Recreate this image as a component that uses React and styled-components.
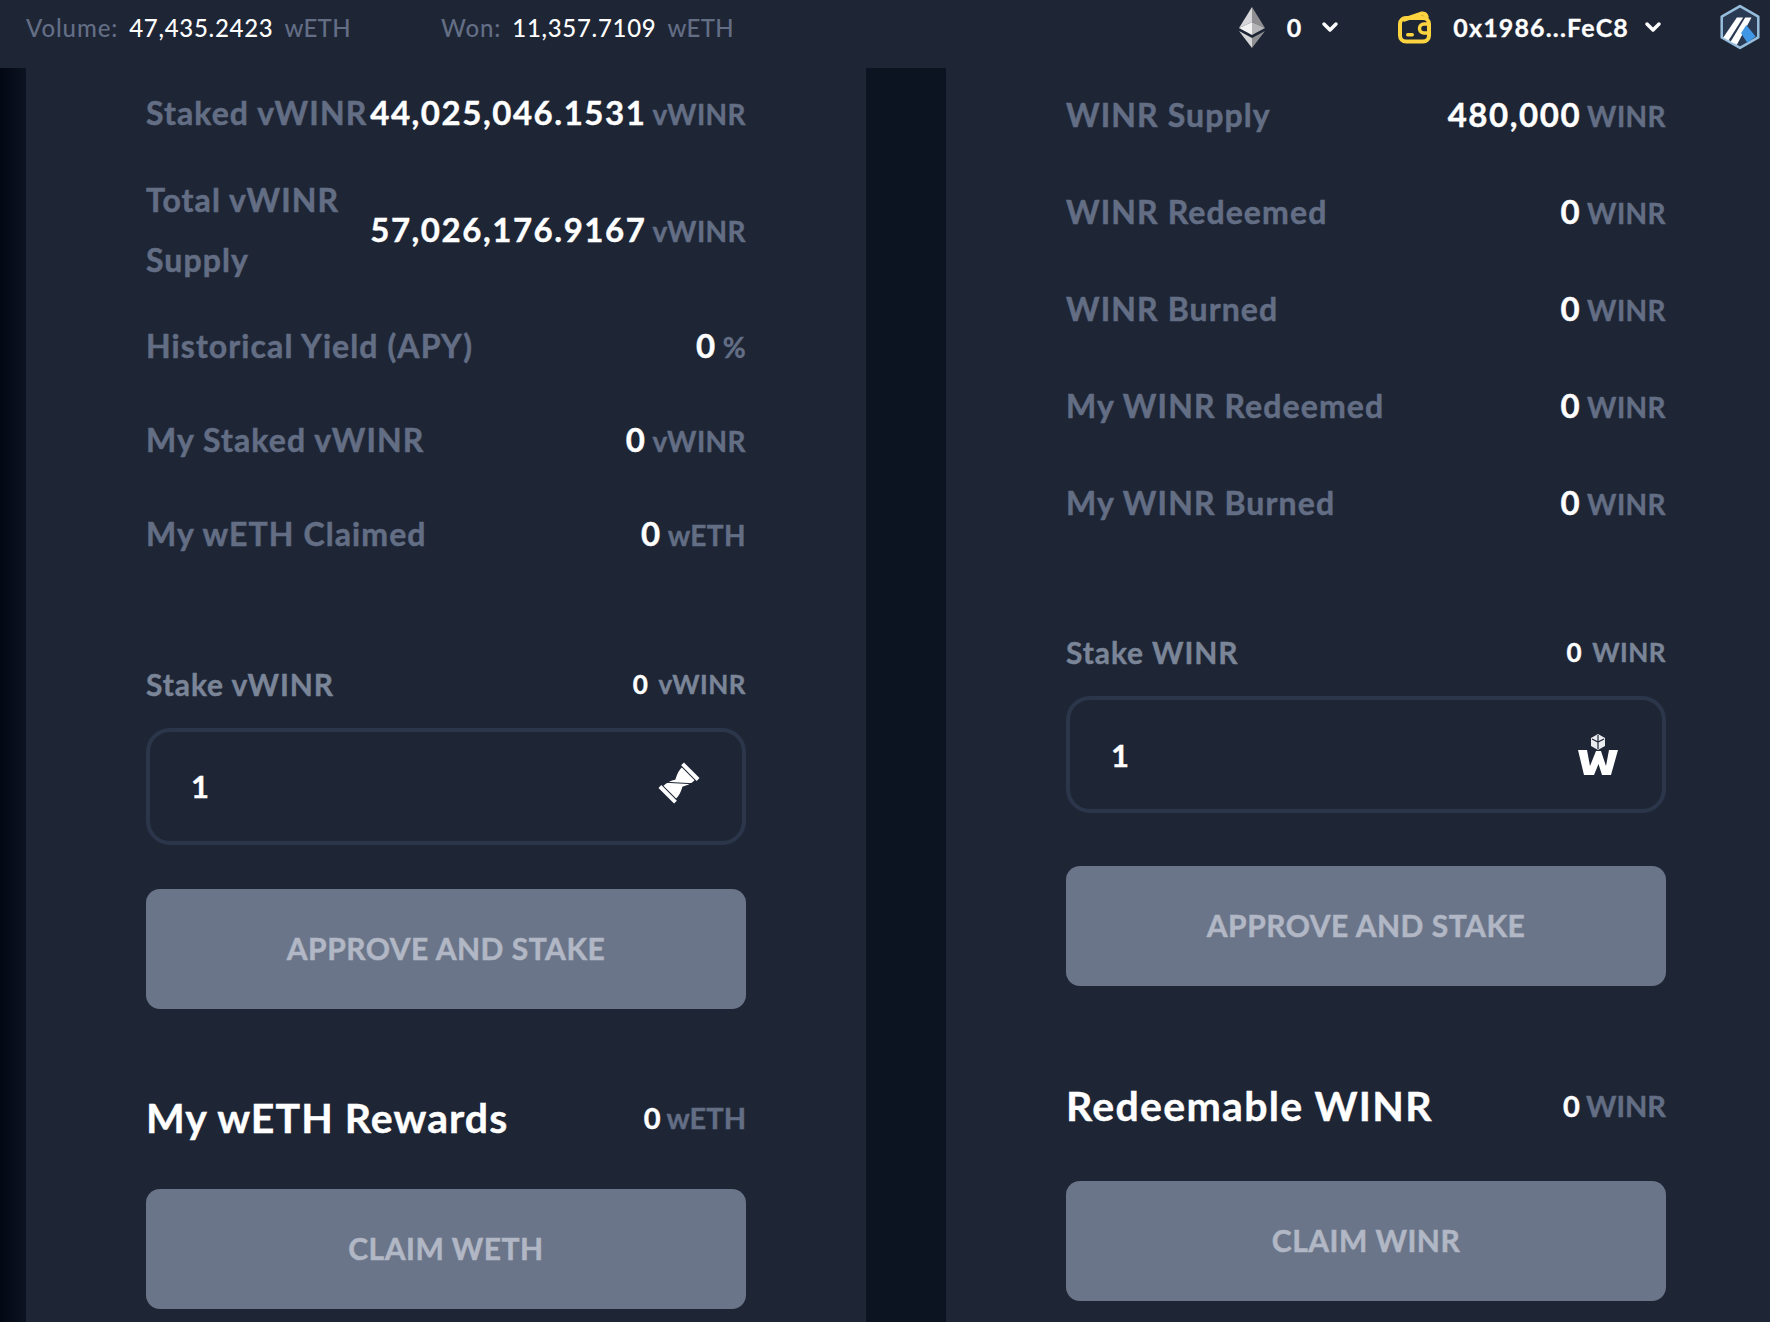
import React from "react";
import styled, { createGlobalStyle } from "styled-components";
import { ChevronDown } from "lucide-react";

const Global = createGlobalStyle`
  html, body { margin: 0; padding: 0; background: #0b101d; }
  body { font-family: Lato, "Open Sans", sans-serif; width: 1770px; height: 1322px; overflow: hidden; }
  * { box-sizing: border-box; }
`;

const Page = styled.div`
  width: 1770px;
  height: 1322px;
  display: flex;
  flex-direction: column;
  overflow: hidden;
`;

const TopBar = styled.header`
  height: 68px;
  flex: none;
  background: #1e2535;
  display: flex;
  align-items: center;
  padding: 0 9px 14px 26px;
  font-size: 24px;
`;

const Stat = styled.div`
  display: flex;
  align-items: baseline;
  gap: 11px;
  width: ${(p) => p.$width}px;
  color: #636e85;
  font-weight: 500;
  letter-spacing: 0.3px;
  white-space: nowrap;
`;

const StatLabel = styled.span`
  letter-spacing: 0.9px;
`;

const StatValue = styled.span`
  color: #fff;
  letter-spacing: 0.7px;
`;

const Spacer = styled.div`
  flex: 1;
`;

const BarGroup = styled.div`
  display: flex;
  align-items: center;
  margin-left: ${(p) => p.$ml}px;
  color: #fff;
  font-weight: 700;
  font-size: 25px;
  letter-spacing: 1.15px;
  -webkit-text-stroke: 0.3px #fff;
`;

const BarText = styled.span`
  margin-left: ${(p) => p.$ml}px;
  margin-right: ${(p) => p.$mr}px;
`;

const Columns = styled.main`
  flex: 1;
  display: flex;
  background: linear-gradient(90deg, #020813 0, #0c1321 26px, #0c1321 100%);
`;

const Panel = styled.section`
  background: #1e2636;
  margin-left: ${(p) => p.$ml}px;
  width: ${(p) => p.$width}px;
  padding: ${(p) => p.$pt}px ${(p) => p.$pr}px 0 120px;
  flex: none;
`;

const Row = styled.div`
  display: flex;
  justify-content: space-between;
  align-items: center;
  margin-bottom: ${(p) => p.$mb}px;
`;

const Label = styled.div`
  width: ${(p) => (p.$wrap ? "222px" : "auto")};
  color: #636e85;
  font-weight: 700;
  font-size: 32px;
  letter-spacing: 1.1px;
  line-height: 60px;
  -webkit-text-stroke: 0.5px #636e85;
  white-space: ${(p) => (p.$wrap ? "normal" : "nowrap")};
`;

const Amount = styled.div`
  display: flex;
  align-items: baseline;
  gap: 6px;
  margin-top: -2px;
  color: #636e85;
  font-size: 28px;
  font-weight: 700;
  letter-spacing: 0.4px;
  -webkit-text-stroke: 0.4px #636e85;
  white-space: nowrap;
`;

const AmountValue = styled.span`
  color: #fff;
  font-size: 33px;
  letter-spacing: 1.55px;
  -webkit-text-stroke: 0.4px #fff;
`;

const StakeHead = styled.div`
  display: flex;
  justify-content: space-between;
  align-items: center;
  height: 40px;
  margin-top: ${(p) => p.$mt}px;
  color: #7b8598;
  font-weight: 700;
  font-size: 30px;
  letter-spacing: 0.9px;
  -webkit-text-stroke: 0.4px #7b8598;
`;

const StakeAmount = styled.div`
  display: flex;
  align-items: center;
  gap: 10px;
  font-size: 26px;
  letter-spacing: 0.5px;
`;

const StakeValue = styled.span`
  color: #fff;
  -webkit-text-stroke: 0.4px #fff;
`;

const InputBox = styled.div`
  height: 117px;
  margin-top: ${(p) => p.$mt}px;
  border: 4px solid #2c364b;
  border-radius: 24px;
  display: flex;
  align-items: center;
  justify-content: space-between;
  padding: 0 44px 0 41px;
  color: #fff;
  font-size: 31px;
  font-weight: 700;
  -webkit-text-stroke: 0.4px #fff;
`;

const ActionButton = styled.div`
  height: 120px;
  margin-top: ${(p) => p.$mt}px;
  padding-bottom: 2px;
  border-radius: 14px;
  background: #6b7589;
  color: #b1b7c4;
  font-size: 30px;
  font-weight: 700;
  letter-spacing: 0.5px;
  -webkit-text-stroke: 0.5px #b1b7c4;
  display: flex;
  align-items: center;
  justify-content: center;
`;

const RewardHead = styled.div`
  display: flex;
  justify-content: space-between;
  align-items: center;
  height: 60px;
  margin-top: ${(p) => p.$mt}px;
`;

const RewardTitle = styled.h2`
  margin: 0;
  color: #fff;
  font-size: 41px;
  font-weight: 700;
  letter-spacing: ${(p) => p.$ls}px;
  -webkit-text-stroke: 0.4px #fff;
`;

const RewardAmount = styled(Amount)`
  gap: 6px;
  margin-top: 0;
  font-size: 29px;
  letter-spacing: 0;
`;

const RewardValue = styled.span`
  color: #fff;
  font-size: 29px;
  -webkit-text-stroke: 0.4px #fff;
`;

const EthIcon = () => (
  <svg width="26" height="41" viewBox="0 0 26 41">
    <polygon points="13,0 13,15 26,21" fill="#8f8f92" />
    <polygon points="13,0 0,21 13,15" fill="#d6d6d8" />
    <polygon points="13,15 0,21 13,28" fill="#f2f2f3" />
    <polygon points="13,15 26,21 13,28" fill="#b5b5b8" />
    <polygon points="0,24 13,41 13,31" fill="#d6d6d8" />
    <polygon points="26,24 13,41 13,31" fill="#8f8f92" />
  </svg>
);

const WalletIcon = () => (
  <svg width="34" height="34" viewBox="0 0 34 34" fill="none">
    <path d="M5 10 L24 3.5 Q28 3 29 8" stroke="#fcd440" strokeWidth="4" strokeLinejoin="round" />
    <rect x="2" y="8" width="29" height="23.5" rx="6" stroke="#fcd440" strokeWidth="4" />
    <path d="M31 14 H26 a4.5 4.5 0 0 0 0 9 H31" stroke="#fcd440" strokeWidth="3.5" />
    <rect x="8" y="23" width="8" height="3.5" rx="1.7" fill="#fcd440" />
  </svg>
);

const ArbitrumIcon = () => (
  <svg width="42" height="46" viewBox="0 0 40 44" fill="none">
    <polygon points="20,2 37.5,12 37.5,32 20,42 2.5,32 2.5,12" fill="#2a3a52" stroke="#96bedc" strokeWidth="2.4" strokeLinejoin="round" />
    <polygon points="17,13 23,13 9,35 4,32" fill="#fff" />
    <polygon points="25,13 31,13 17,39 11,36" fill="#fff" />
    <polygon points="26,20 35,31 27,37 21,28" fill="#3f97e6" />
  </svg>
);

const HourglassIcon = () => (
  <svg width="42" height="42" viewBox="-2 3 42 42" overflow="visible">
    <g transform="rotate(45 21 21)">
      <rect x="10" y="3" width="22" height="4" fill="#fff" />
      <rect x="10" y="35" width="22" height="4" fill="#fff" />
      <path d="M12 8 H30 C30 14 27.500 18 26 21 C27.500 24 30 28 30 34 H12 C12 28 14.500 24 16 21 C14.500 18 12 14 12 8 Z" fill="#fff" />
      <path d="M11 30 L31 12" stroke="#1e2636" strokeWidth="1" />
    </g>
  </svg>
);

const WinrIcon = () => (
  <svg width="40" height="42" viewBox="0 0 40 42">
    <polygon points="20,0 27,4 27,12 20,16 13,12 13,4" fill="#e9ebef" />
    <path d="M20 1 V15 M14 5 L20 8 L26 5" stroke="#1e2636" strokeWidth="1.2" fill="none" />
    <path d="M0 16 H9 L12 32 L18 17 H23 L28 32 L31 16 H40 L33 41 H24 L20.500 30 L16 41 H6 Z" fill="#fff" />
  </svg>
);

const Stats = ({ items }) =>
  items.map(([label, value, unit, mb, wrap]) => (
    <Row key={label} $mb={mb}>
      <Label $wrap={wrap}>{label}</Label>
      <Amount>
        <AmountValue>{value}</AmountValue>
        {unit}
      </Amount>
    </Row>
  ));

const leftStats = [
  ["Staked vWINR", "44,025,046.1531", "vWINR", 27],
  ["Total vWINR Supply", "57,026,176.9167", "vWINR", 26, true],
  ["Historical Yield (APY)", "0", "%", 34],
  ["My Staked vWINR", "0", "vWINR", 34],
  ["My wETH Claimed", "0", "wETH", 0],
];

const rightStats = [
  ["WINR Supply", "480,000", "WINR", 37],
  ["WINR Redeemed", "0", "WINR", 37],
  ["WINR Burned", "0", "WINR", 37],
  ["My WINR Redeemed", "0", "WINR", 37],
  ["My WINR Burned", "0", "WINR", 0],
];

export default function App() {
  return (
    <Page>
      <Global />
      <TopBar>
        <Stat $width="415">
          <StatLabel>Volume:</StatLabel> <StatValue>47,435.2423</StatValue> wETH
        </Stat>
        <Stat $width="400">
          <StatLabel>Won:</StatLabel> <StatValue>11,357.7109</StatValue> wETH
        </Stat>
        <Spacer />
        <BarGroup>
          <EthIcon />
          <BarText $ml="22" $mr="16">0</BarText>
          <ChevronDown size={24} strokeWidth={3.5} />
        </BarGroup>
        <BarGroup $ml="56">
          <WalletIcon />
          <BarText $ml="21" $mr="12">0x1986...FeC8</BarText>
          <ChevronDown size={24} strokeWidth={3.5} />
        </BarGroup>
        <BarGroup $ml="54">
          <ArbitrumIcon />
        </BarGroup>
      </TopBar>
      <Columns>
        <Panel $ml="26" $width="840" $pt="15" $pr="120">
          <Stats items={leftStats} />
          <StakeHead $mt="99.500">
            Stake vWINR
            <StakeAmount>
              <StakeValue>0</StakeValue> vWINR
            </StakeAmount>
          </StakeHead>
          <InputBox $mt="24">
            1
            <HourglassIcon />
          </InputBox>
          <ActionButton $mt="44">APPROVE AND STAKE</ActionButton>
          <RewardHead $mt="79">
            <RewardTitle $ls="1.05">My wETH Rewards</RewardTitle>
            <RewardAmount>
              <RewardValue>0</RewardValue> wETH
            </RewardAmount>
          </RewardHead>
          <ActionButton $mt="41">CLAIM WETH</ActionButton>
        </Panel>
        <Panel $ml="80" $width="824" $pt="17" $pr="104">
          <Stats items={rightStats} />
          <StakeHead $mt="99">
            Stake WINR
            <StakeAmount>
              <StakeValue>0</StakeValue> WINR
            </StakeAmount>
          </StakeHead>
          <InputBox $mt="24">
            1
            <WinrIcon />
          </InputBox>
          <ActionButton $mt="53">APPROVE AND STAKE</ActionButton>
          <RewardHead $mt="89">
            <RewardTitle $ls="1.3">Redeemable WINR</RewardTitle>
            <RewardAmount>
              <RewardValue>0</RewardValue> WINR
            </RewardAmount>
          </RewardHead>
          <ActionButton $mt="46">CLAIM WINR</ActionButton>
        </Panel>
      </Columns>
    </Page>
  );
}
